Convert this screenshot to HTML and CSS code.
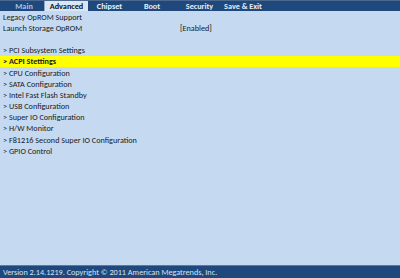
FILE: index.html
```html
<!DOCTYPE html>
<html>
<head>
<meta charset="utf-8">
<link rel="stylesheet" href="styles.css">
</head>
<body>
<div class="screen">
  <div class="tabs">
    <div class="tab tab-main">Main</div>
    <div class="tab tab-active">Advanced</div>
    <div class="tab tab-chipset">Chipset</div>
    <div class="tab tab-boot">Boot</div>
    <div class="tab tab-security">Security</div>
    <div class="tab tab-exit">Save &amp; Exit</div>
  </div>
  <div class="content">
    <div class="row"><span class="label">Legacy OpROM Support</span></div>
    <div class="row"><span class="label">Launch Storage OpROM</span><span class="value">[Enabled]</span></div>
    <div class="row"></div>
    <div class="row"><span class="label">&gt; PCI Subsystem Settings</span></div>
    <div class="row row-sel"><span class="label">&gt; ACPI Stettings</span></div>
    <div class="row"><span class="label">&gt; CPU Configuration</span></div>
    <div class="row"><span class="label">&gt; SATA Configuration</span></div>
    <div class="row"><span class="label">&gt; Intel Fast Flash Standby</span></div>
    <div class="row"><span class="label">&gt; USB Configuration</span></div>
    <div class="row"><span class="label">&gt; Super IO Configuration</span></div>
    <div class="row"><span class="label">&gt; H/W Monitor</span></div>
    <div class="row"><span class="label">&gt; F81216 Second Super IO Configuration</span></div>
    <div class="row"><span class="label">&gt; GPIO Control</span></div>
  </div>
  <div class="footer">Version 2.14.1219. Copyright © 2011 American Megatrends, Inc.</div>
</div>
</body>
</html>
```
FILE: styles.css
```css
html, body {
  margin: 0;
  padding: 0;
  background: #c5d9f1;
}
.screen {
  width: 400px;
  height: 278px;
  display: flex;
  flex-direction: column;
  font-family: Carlito, Lato, sans-serif;
  font-size: 8.2px;
  color: #1a1a1a;
  overflow: hidden;
}
.tabs {
  height: 11px;
  background: #1f497d;
  border-top: 1px solid #4a6890;
  box-sizing: border-box;
  display: flex;
  padding-left: 4px;
  flex-shrink: 0;
}
.tab {
  display: flex;
  align-items: center;
  justify-content: center;
  font-weight: bold;
  color: #e6eef8;
  height: 10px;
  white-space: nowrap;
}
.tab-main {
  width: 40px;
  color: #a9c3e3;
  border-right: 1px solid #8fa9c8;
}
.tab-active {
  width: 43px;
  background: #dbe6f3;
  color: #111;
}
.tab-chipset { width: 43px; }
.tab-boot { width: 42px; }
.tab-security { width: 53px; }
.tab-exit { width: 34px; }
.content {
  flex: 1;
  display: flex;
  flex-direction: column;
}
.row {
  height: 11.2px;
  display: flex;
  align-items: center;
  padding-left: 3px;
  white-space: nowrap;
}
.row .label {
  width: 177px;
}
.row-sel {
  background: #ffff00;
  font-weight: bold;
}
.footer {
  height: 13px;
  background: #1f497d;
  border-top: 1px solid #5b7aa3;
  box-sizing: border-box;
  color: #d6e2f2;
  display: flex;
  align-items: center;
  padding-left: 3px;
  flex-shrink: 0;
}
```
